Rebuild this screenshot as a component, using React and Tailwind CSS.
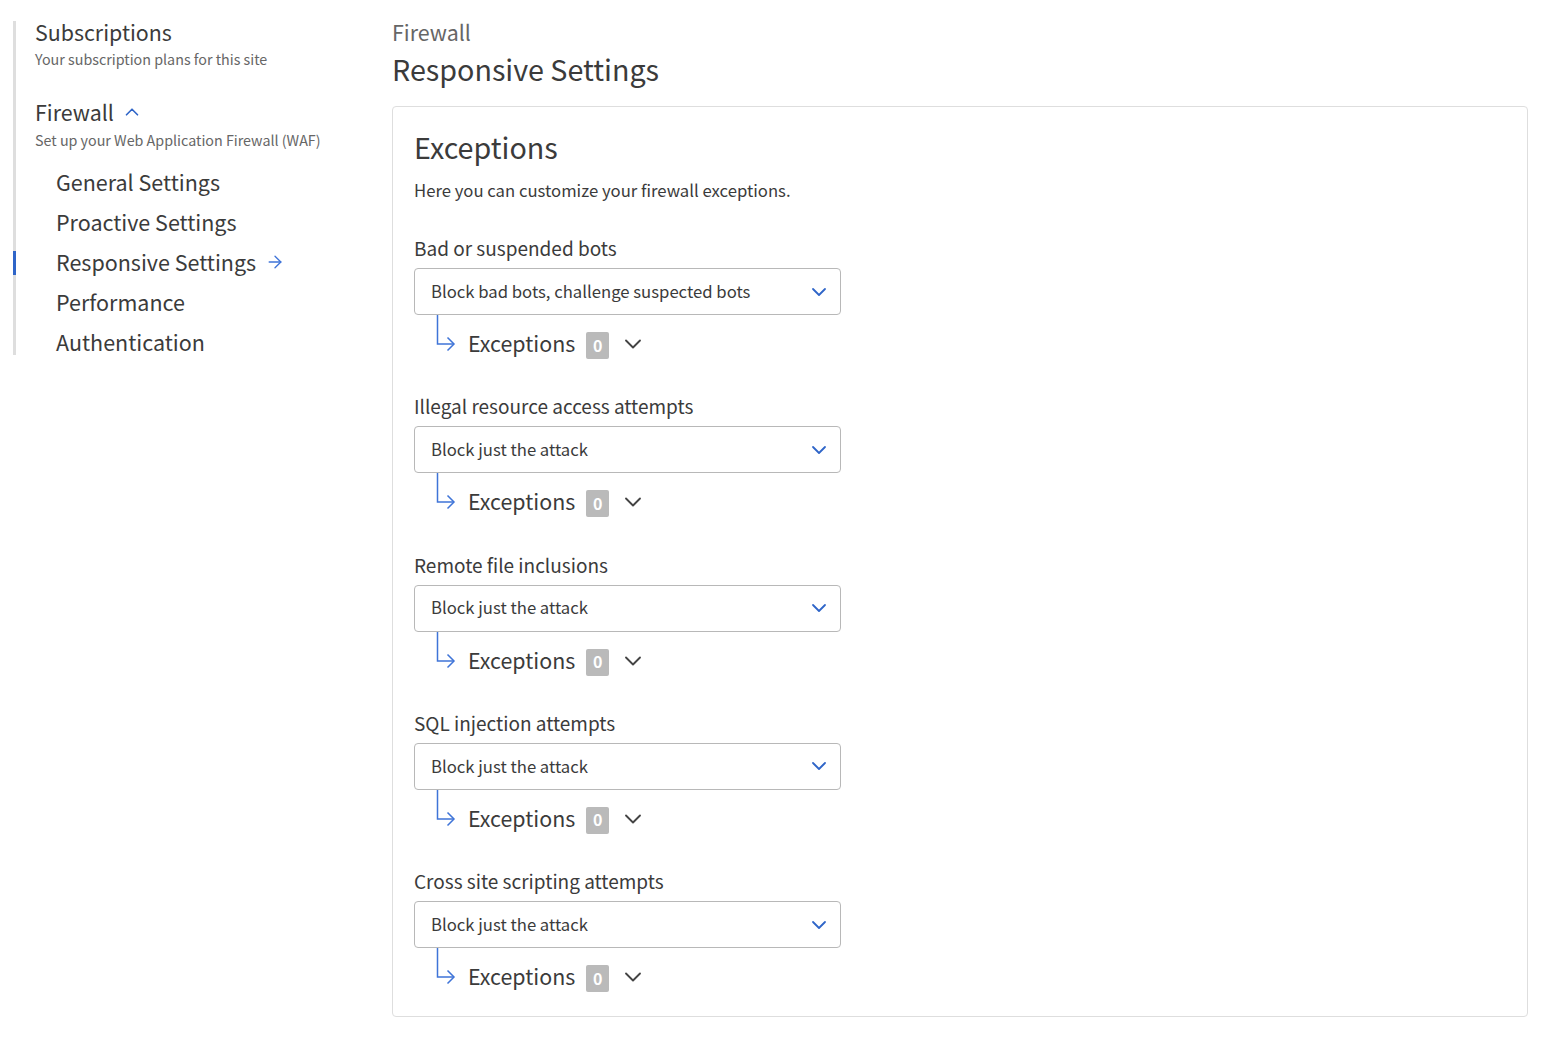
import { ChevronDown, ChevronUp, ArrowRight } from 'lucide-react';

const font = "font-['Noto_Sans_CJK_SC','Liberation_Sans',sans-serif]";

const sections = [
  { label: 'Bad or suspended bots', value: 'Block bad bots, challenge suspected bots' },
  { label: 'Illegal resource access attempts', value: 'Block just the attack' },
  { label: 'Remote file inclusions', value: 'Block just the attack' },
  { label: 'SQL injection attempts', value: 'Block just the attack' },
  { label: 'Cross site scripting attempts', value: 'Block just the attack' },
];

const subItems = ['General Settings', 'Proactive Settings', 'Responsive Settings', 'Performance', 'Authentication'];

function Sidebar() {
  return (
    <aside className="relative ml-[13px] h-[334px] w-[379px] flex-shrink-0 border-l-[3px] border-[#dedede] pl-[19px] text-[#3b3b3b]">
      <div className="text-[21.4px] leading-[22px]">Subscriptions</div>
      <div className="mt-[6px] text-[14.3px] leading-[20px] text-[#666]">Your subscription plans for this site</div>
      <div className="mt-[29px] flex items-center text-[21.4px] leading-[28px]">
        Firewall
        <ChevronUp size={22} strokeWidth={1.8} className="ml-[7px] text-[#2f65c8]" />
      </div>
      <div className="mt-[4px] text-[14.3px] leading-[20px] text-[#666]">Set up your Web Application Firewall (WAF)</div>
      <ul className="mt-[12px] pl-[21px]">
        {subItems.map((item) => (
          <li key={item} className="relative flex h-[40px] items-center text-[21.5px]">
            {item === 'Responsive Settings' && (
              <span className="absolute left-[-43px] top-[9px] h-[24px] w-[3px] bg-[#2f65c8]" />
            )}
            {item}
            {item === 'Responsive Settings' && <ArrowRight size={20} strokeWidth={1.6} className="ml-[9px] text-[#3f74d8]" />}
          </li>
        ))}
      </ul>
    </aside>
  );
}

function Section({ label, value }) {
  return (
    <div className="h-[158.25px]">
      <div className="text-[19px] leading-[24px] text-[#3b3b3b]">{label}</div>
      <div className="mt-[8px] flex h-[47px] w-[427px] items-center justify-between rounded-[4px] border border-[#b8b8b8] pl-[16px] pr-[9px] text-[16.7px] text-[#3b3b3b]">
        {value}
        <ChevronDown size={24} strokeWidth={1.8} className="text-[#2f65c8]" />
      </div>
      <div className="flex h-[60px] items-start">
        <svg width="22" height="38" viewBox="0 0 22 38" fill="none" className="ml-[21px] flex-shrink-0 text-[#3f74d8]" stroke="currentColor" strokeWidth="1.5">
          <path d="M2.5 0V29H19" />
          <path d="M12.5 22.5L19 29L12.5 35.5" />
        </svg>
        <span className="ml-[11px] mt-[12px] text-[21.4px] leading-[32px] text-[#3b3b3b]">Exceptions</span>
        <span className="ml-[11px] mt-[17px] flex h-[27px] w-[23px] items-center justify-center rounded-[2px] bg-[#bababa] pb-[2px] text-[16px] font-bold text-white">0</span>
        <ChevronDown size={28} strokeWidth={1.6} className="ml-[10px] mt-[15px] text-[#444]" />
      </div>
    </div>
  );
}

export default function App() {
  return (
    <div className={`${font} flex min-h-[1038px] bg-white pt-[21px]`}>
      <Sidebar />
      <main className="w-[1136px]">
        <div className="text-[21.4px] leading-[22px] text-[#666]">Firewall</div>
        <h1 className="mt-[7px] text-[28.7px] leading-[38px] text-[#3b3b3b]">Responsive Settings</h1>
        <section className="mt-[18px] h-[911px] rounded-[4px] border border-[#dedede] pl-[21px] pt-[21px]">
          <h2 className="text-[28.7px] leading-[38px] text-[#3b3b3b]">Exceptions</h2>
          <p className="mt-[12px] text-[16.7px] leading-[24px] text-[#3b3b3b]">Here you can customize your firewall exceptions.</p>
          <div className="mt-[34px]">
            {sections.map((s) => (
              <Section key={s.label} label={s.label} value={s.value} />
            ))}
          </div>
        </section>
      </main>
    </div>
  );
}
